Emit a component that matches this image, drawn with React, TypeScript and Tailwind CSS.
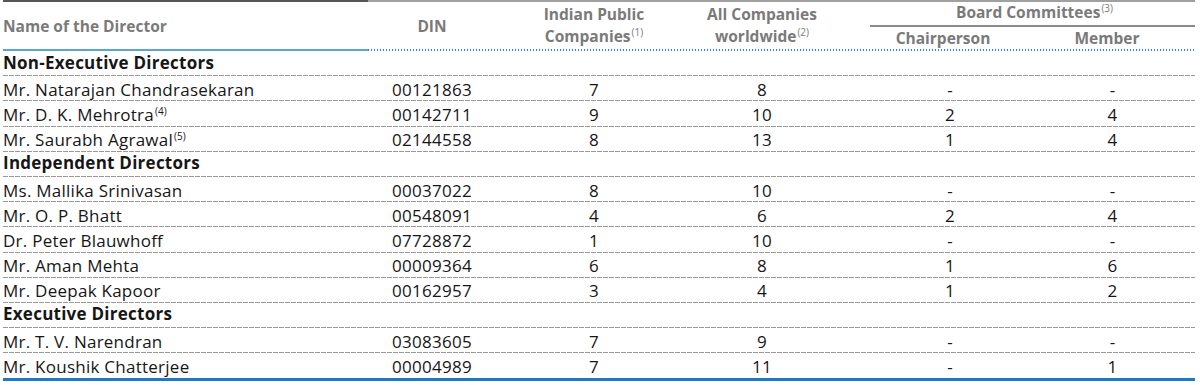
import React from 'react';

type Row =
  | { kind: 'section'; title: string }
  | { kind: 'person'; name: string; note?: string; din: string; ipc: string; acw: string; chair: string; member: string };

const rows: Row[] = [
  { kind: 'section', title: 'Non-Executive Directors' },
  { kind: 'person', name: 'Mr. Natarajan Chandrasekaran', din: '00121863', ipc: '7', acw: '8', chair: '-', member: '-' },
  { kind: 'person', name: 'Mr. D. K. Mehrotra', note: '(4)', din: '00142711', ipc: '9', acw: '10', chair: '2', member: '4' },
  { kind: 'person', name: 'Mr. Saurabh Agrawal', note: '(5)', din: '02144558', ipc: '8', acw: '13', chair: '1', member: '4' },
  { kind: 'section', title: 'Independent Directors' },
  { kind: 'person', name: 'Ms. Mallika Srinivasan', din: '00037022', ipc: '8', acw: '10', chair: '-', member: '-' },
  { kind: 'person', name: 'Mr. O. P. Bhatt', din: '00548091', ipc: '4', acw: '6', chair: '2', member: '4' },
  { kind: 'person', name: 'Dr. Peter Blauwhoff', din: '07728872', ipc: '1', acw: '10', chair: '-', member: '-' },
  { kind: 'person', name: 'Mr. Aman Mehta', din: '00009364', ipc: '6', acw: '8', chair: '1', member: '6' },
  { kind: 'person', name: 'Mr. Deepak Kapoor', din: '00162957', ipc: '3', acw: '4', chair: '1', member: '2' },
  { kind: 'section', title: 'Executive Directors' },
  { kind: 'person', name: 'Mr. T. V. Narendran', din: '03083605', ipc: '7', acw: '9', chair: '-', member: '-' },
  { kind: 'person', name: 'Mr. Koushik Chatterjee', din: '00004989', ipc: '7', acw: '11', chair: '-', member: '1' },
];

const dashed =
  'bg-[repeating-linear-gradient(90deg,#9a9a9a_0_5px,transparent_5px_6px)] bg-[length:100%_1px] bg-bottom bg-no-repeat';

function Sup({ children }: { children: React.ReactNode }) {
  return <span className="text-[10px] font-normal relative -top-[6px] ml-[1px] tracking-normal">{children}</span>;
}

export default function App() {
  return (
    <div
      className="w-[1200px] h-[385px] bg-white pl-[3px] pr-[5px] text-[#161616]"
      style={{ fontFamily: '"Open Sans", "Noto Sans", sans-serif' }}
    >
      {/* header */}
      <div className="flex h-[51px] text-[15.5px] font-bold text-[#7a7a7a] leading-[22px]">
        <div className="w-[365px] flex flex-col">
          <div className="h-[2px] bg-[#555]" />
          <div className="flex-1 flex items-center">Name of the Director</div>
          <div className="h-[2px] bg-[#5aa5d8]" />
        </div>
        <div className="flex-1 flex flex-col">
          <div className="h-[2px] bg-[#a0a0a0]" />
          <div className="flex-1 flex">
            <div className="w-[128px] flex items-center justify-center">DIN</div>
            <div className="w-[196px] flex flex-col items-center justify-center">
              <span>Indian Public</span>
              <span>
                Companies<Sup>(1)</Sup>
              </span>
            </div>
            <div className="w-[178px] pr-[38px] flex flex-col items-center justify-center">
              <span>All Companies</span>
              <span>
                worldwide<Sup>(2)</Sup>
              </span>
            </div>
            <div className="flex-1 flex flex-col">
              <div className="h-[23px] flex items-end justify-center pl-[4px]">
                <span>
                  Board Committees<Sup>(3)</Sup>
                </span>
              </div>
              <div className="h-[1.5px] bg-[#8a8a8a]" />
              <div className="flex-1 flex">
                <div className="w-[160px] flex items-center justify-center pr-[14px]">Chairperson</div>
                <div className="flex-1 flex items-center justify-center pr-[11px]">Member</div>
              </div>
            </div>
          </div>
          <div className="h-[2px] bg-[repeating-linear-gradient(90deg,#2f86c8_0_1.5px,transparent_1.5px_3px)]" />
        </div>
      </div>

      {/* body */}
      <div className="text-[17px] leading-none tracking-[0.25px]">
        {rows.map((r, i) =>
          r.kind === 'section' ? (
            <div key={i} className={`h-[25.2px] flex items-center pb-[3px] font-bold ${dashed}`}>
              {r.title}
            </div>
          ) : (
            <div
              key={i}
              className={`h-[25.2px] flex items-center pt-[1px] ${i === rows.length - 1 ? '' : dashed}`}
            >
              <div className="w-[365px]">
                {r.name}
                {r.note && <Sup>{r.note}</Sup>}
              </div>
              <div className="w-[128px] text-center">{r.din}</div>
              <div className="w-[196px] text-center">{r.ipc}</div>
              <div className="w-[178px] pr-[38px] text-center">{r.acw}</div>
              <div className="w-[160px] text-center">{r.chair}</div>
              <div className="flex-1 text-center">{r.member}</div>
            </div>
          )
        )}
        <div className="h-[2.5px] bg-[#1f78c8]" />
      </div>
    </div>
  );
}
